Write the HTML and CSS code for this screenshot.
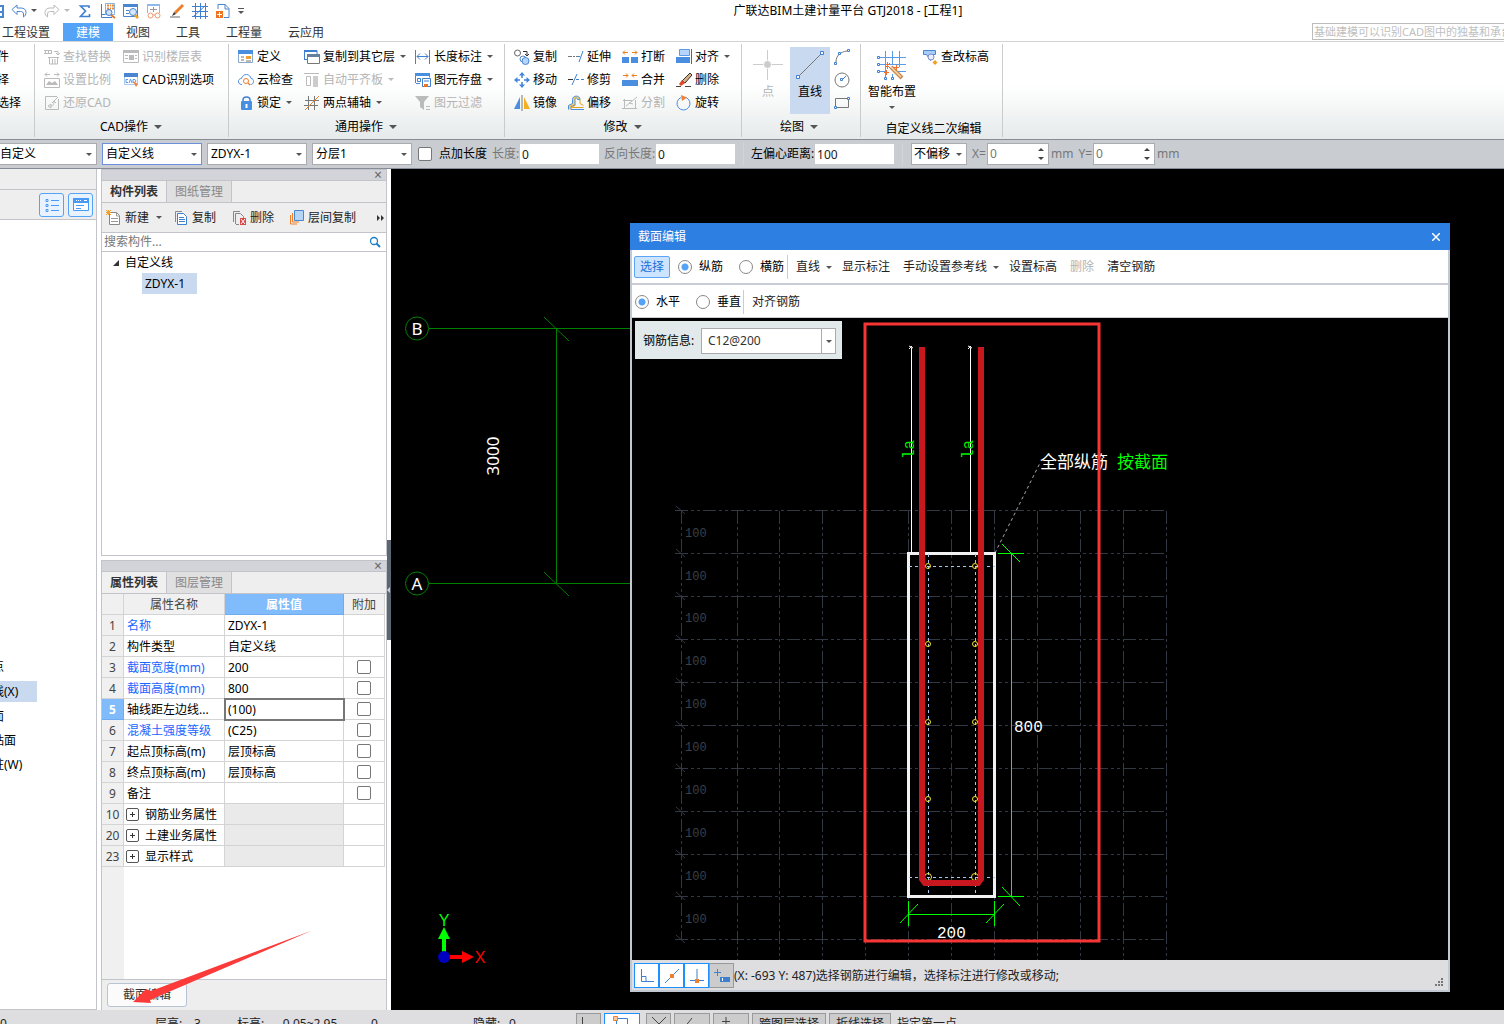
FILE: index.html
```html
<!DOCTYPE html>
<html lang="zh-CN">
<head>
    <meta charset="UTF-8">
    <meta name="viewport" content="width=device-width, initial-scale=1.0">
    <title>广联达BIM土建计量平台 GTJ2018</title>
    <link rel="stylesheet" href="styles.css">
</head>
<body>
<div class="app">

    <header class="titlebar">
        <div class="quick">
            <svg class="quick-save" width="4" height="16" viewBox="0 0 4 16"><path d="M0 3h3v11H0M0 9h3" fill="none" stroke="#4a86d0" stroke-width="2"/></svg>
            <button aria-label="撤销"><svg width="16" height="16" viewBox="0 0 16 16"><path d="M1 6.500l5-4.500v3h4c3 0 5 1.500 5 4.500 0 2-1 3.500-2.500 4.500v-3c0-1.500-1-2.500-3-2.500H6v3z" fill="#fff" stroke="#4a86d0"/></svg></button>
            <i class="caret"></i>
            <button aria-label="重做"><svg width="16" height="16" viewBox="0 0 16 16"><path d="M15 6.500l-5-4.500v3H6c-3 0-5 1.500-5 4.500 0 2 1 3.500 2.500 4.500v-3c0-1.500 1-2.500 3-2.500H10v3z" fill="#fff" stroke="#bbb"/></svg></button>
            <i class="caret dim"></i>
            <button aria-label="汇总计算"><svg width="16" height="16" viewBox="0 0 16 16"><path d="M12 5V3H3.500l5 5-5 5.500H12.500v-2.500" fill="none" stroke="#3f7fcf" stroke-width="1.600"/></svg></button>
            <button aria-label="查看工程量"><svg width="16" height="16" viewBox="0 0 16 16"><path d="M1.500 1v13.500H12M1.500 11.500h4" fill="none" stroke="#3f7fcf"/><path d="M5.500 .5h9v11h-9z" fill="#fff" stroke="#8fb0dc"/><path d="M7 2.500h2M10 2.500h1M12 2.500h2M7 5.500h2M10 5.500h1M12 5.500h2" stroke="#e8853b" stroke-width="2"/><circle cx="9" cy="9.500" r="3" fill="#cfe2f8" stroke="#3f7fcf"/><path d="M11 12l4 3" stroke="#d87830" stroke-width="2"/></svg></button>
            <button aria-label="查看报表"><svg width="16" height="16" viewBox="0 0 16 16"><path d="M.5 1.500h14v12H.5z" fill="#fff" stroke="#4a86d0"/><path d="M0 1h15v3H0z" fill="#4a86d0"/><path d="M3 7.500h3M3 10.500h3" stroke="#4a86d0"/><circle cx="10" cy="9" r="3.500" fill="#d8e8fa" stroke="#4a86d0"/><path d="M12 12l3 3" stroke="#f0a020" stroke-width="2.500"/></svg></button>
            <button aria-label="查看计算式"><svg width="16" height="16" viewBox="0 0 16 16"><path d="M1.500 10V1.500h12V10" fill="#fff" stroke="#8fb8e8"/><path d="M1 1h13v2H1z" fill="#8fb8e8"/><path d="M4 6.500h7M7.500 4v5" stroke="#999"/><circle cx="4.500" cy="12.500" r="2.500" fill="#fff" stroke="#f0986a"/><circle cx="11.500" cy="12.500" r="2.500" fill="#fff" stroke="#f0986a"/><path d="M7 12h2" stroke="#f0986a"/></svg></button>
            <button aria-label="编辑"><svg width="16" height="16" viewBox="0 0 16 16"><path d="M1 14h10" stroke="#666"/><path d="M6 10l8-8" stroke="#ee7f2d" stroke-width="3"/><path d="M3 13l2-4 2 2z" fill="#333"/></svg></button>
            <button aria-label="轴网"><svg width="16" height="16" viewBox="0 0 16 16"><path d="M3.500 0v16M8.500 0v16M13.500 0v16M0 3.500h16M0 8.500h16M0 13.500h16M2 13L14 2" fill="none" stroke="#3f7fcf"/></svg></button>
            <button aria-label="新建构件"><svg width="16" height="16" viewBox="0 0 16 16"><path d="M3 6V1.500h7l4 4v9H9" fill="#fff" stroke="#4a86d0"/><path d="M10 1v5h4" fill="none" stroke="#4a86d0"/><path d="M1 8h7v7H1z" fill="#ee7420"/><path d="M4.500 9v5M2 11.500h5" stroke="#fff"/></svg></button>
            <i class="caret lined"></i>
        </div>
        <h1>广联达BIM土建计量平台 GTJ2018 - [工程1]</h1>
    </header>

    <nav class="tabs">
        <a href="#">工程设置</a>
        <a href="#" class="active">建模</a>
        <a href="#">视图</a>
        <a href="#">工具</a>
        <a href="#">工程量</a>
        <a href="#">云应用</a>
        <input type="text" class="hint" aria-label="搜索" placeholder="基础建模可以识别CAD图中的独基和承台">
    </nav>

    <section class="ribbon">
        <div class="group group-select">
            <div class="cols">
                <div class="col"><button>件</button><button>择</button><button>选择</button></div>
            </div>
        </div>

        <div class="group group-cad">
            <div class="cols">
                <div class="col">
                    <button disabled><svg width="16" height="16" viewBox="0 0 16 16"><path d="M0 1.500h8M0 4.500h8M1.500 1v4M4.500 1v4M7.500 1v4M10 2.500h4v3M12 4l2 2 2-2M4 8.500h11M5.500 8v7h8V8M8.500 10v5M11 10v5" fill="none" stroke="#bbb"/></svg>查找替换</button>
                    <button disabled><svg width="16" height="16" viewBox="0 0 16 16"><path d="M1 2.500h5M10 2.500h5M3 .5l-2 2 2 2M13 .5l2 2-2 2M.5 6.500h15v9H.5z" fill="none" stroke="#bbb"/><path d="M2 13l3-4 3 2 3-2 3 4z" fill="#bbb"/></svg>设置比例</button>
                    <button disabled><svg width="16" height="16" viewBox="0 0 16 16"><path d="M13 1.500H1.500v13h13V4M4 11l3 2v-4zM7 11c3 0 3-3 3-5l4-4M10 6l-2 2M10 6l2 2" fill="none" stroke="#bbb"/></svg>还原CAD</button>
                </div>
                <div class="col">
                    <button disabled><svg width="16" height="16" viewBox="0 0 16 16"><path d="M.5 1.500h15v12H.5z" fill="none" stroke="#bbb"/><path d="M0 1h16v3H0zM6 6h5v5H6z" fill="#bbb"/><path d="M2 6.500h3M2 9.500h3M12 6.500h2M12 9.500h2" stroke="#bbb"/></svg>识别楼层表</button>
                    <button><svg width="16" height="16" viewBox="0 0 16 16"><path d="M1.500 2.500h13v10h-13z" fill="#fff" stroke="#a8c8ee"/><path d="M1 1h14v4H1z" fill="#4a86d0"/><path d="M5 7.500H3v3h2M6 11l1.500-4L9 11M10 7.500h2l1 1.500-1 1.500h-2z" fill="none" stroke="#5b9be5"/><path d="M10 9l5 3-2 3z" fill="#f0803c"/></svg>CAD识别选项</button>
                </div>
            </div>
            <button class="group-label">CAD操作<i class="caret big"></i></button>
        </div>

        <div class="group group-common">
            <div class="cols">
                <div class="col">
                    <button><svg width="16" height="16" viewBox="0 0 16 16"><path d="M.5 2.500h14v11H.5z" fill="#fff" stroke="#8aa8cc"/><path d="M0 1h15v4H0z" fill="#4a8ee0"/><path d="M3 8h3M3 11h3M8 12h5" stroke="#777"/><path d="M8 7h5v3H8z" fill="#f0a030"/></svg>定义</button>
                    <button><svg width="16" height="16" viewBox="0 0 16 16"><path d="M4 12.500C1 12.500 0 10.500 .500 8.500 1 7 2.500 6.500 3.500 6.500 4 4 6 2.500 8.500 2.500S12.500 4.500 13 6.500c2 0 2.500 1.500 2.500 3 0 2-1.500 3-3 3" fill="none" stroke="#4a8ee0"/><circle cx="8" cy="9" r="2.500" fill="#fff" stroke="#f08030"/><path d="M10 11l2 2" stroke="#f08030" stroke-width="1.500"/></svg>云检查</button>
                    <button><svg width="16" height="16" viewBox="0 0 16 16"><path d="M5 8V5c0-4 7-4 7 0v3" fill="none" stroke="#3f7fcf" stroke-width="1.500"/><rect x="3" y="6" width="11" height="9" rx="1" fill="#4a8ee0"/><path d="M8.500 9v4" stroke="#fff" stroke-width="2"/></svg>锁定<i class="caret"></i></button>
                </div>
                <div class="col">
                    <button><svg width="16" height="16" viewBox="0 0 16 16"><path d="M.5 2v8M0 10.500h4M0 1.500h13v4" fill="none" stroke="#3f7fcf"/><path d="M0 1h13v2H0z" fill="#3f7fcf"/><path d="M3.500 5.500h12v9h-12z" fill="#fff" stroke="#777"/><path d="M3 5h13v3H3z" fill="#66809c"/></svg>复制到其它层<i class="caret"></i></button>
                    <button disabled><svg width="16" height="16" viewBox="0 0 16 16"><path d="M0 1.500h15M2.500 4.500h4v9h-4z" fill="none" stroke="#bbb"/><path d="M9 4h5v11H9z" fill="#ccc"/></svg>自动平齐板<i class="caret dim"></i></button>
                    <button><svg width="16" height="16" viewBox="0 0 16 16"><path d="M4.500 1v14M10.500 1v14M1 5.500h14M0 10.500h14" stroke="#777"/><path d="M1 15L15 1" stroke="#ee7f2d"/></svg>两点辅轴<i class="caret"></i></button>
                </div>
                <div class="col">
                    <button><svg width="16" height="16" viewBox="0 0 16 16"><path d="M.5 1v14M14.500 1v14" stroke="#777"/><path d="M2 7.500h11M5 4.500l-3 3 3 3M10 4.500l3 3-3 3" fill="none" stroke="#3f7fcf"/></svg>长度标注<i class="caret"></i></button>
                    <button><svg width="16" height="16" viewBox="0 0 16 16"><path d="M.5 11V1.500h14v4M1 11.500h4" fill="none" stroke="#4a86d0"/><path d="M0 1h15v3H0z" fill="#4a8ee0"/><path d="M2.500 6.500h3v3h-3zM7.500 6.500h8v8h-8z" fill="#fff" stroke="#3f7fcf"/><path d="M9 12h4v3H9z" fill="#ee7420"/><path d="M9 9h5" stroke="#3f7fcf"/></svg>图元存盘<i class="caret"></i></button>
                    <button disabled><svg width="16" height="16" viewBox="0 0 16 16"><path d="M0 1h14L9 7v8l-4-3V7z" fill="#bbb"/><path d="M11 11.500h4M11 14.500h4" stroke="#bbb"/></svg>图元过滤</button>
                </div>
            </div>
            <button class="group-label">通用操作<i class="caret big"></i></button>
        </div>

        <div class="group group-modify">
            <div class="cols">
                <div class="col">
                    <button><svg width="16" height="16" viewBox="0 0 16 16"><circle cx="3.500" cy="4" r="3" fill="#fff" stroke="#666"/><path d="M9 2.500h4v4M11 5l2 2 2-2" fill="none" stroke="#333"/><circle cx="9" cy="10" r="3" fill="#fff" stroke="#4a86d0"/><circle cx="11.500" cy="12" r="3.500" fill="#b5d5f8" stroke="#4a86d0"/></svg>复制</button>
                    <button><svg width="16" height="16" viewBox="0 0 16 16"><path d="M8 0l3 3.500H5zM8 16l3-3.500H5zM0 8l3.500-3v6zM16 8l-3.500-3v6z" fill="#3f85da"/><path d="M8 3v3M8 10v3M3 8h3M10 8h3" stroke="#3f85da" stroke-width="1.500"/></svg>移动</button>
                    <button><svg width="16" height="16" viewBox="0 0 16 16"><path d="M6 2v12H0z" fill="#4a8ee0"/><path d="M10 2v12h6z" fill="#f5b020"/><path d="M8 0v16" stroke="#777"/></svg>镜像</button>
                </div>
                <div class="col">
                    <button><svg width="16" height="16" viewBox="0 0 16 16"><path d="M0 7.500h4M5 7.500h2M8 7.500h2" stroke="#777"/><path d="M10 7.500h2M11 13l4-11" stroke="#3f7fcf"/></svg>延伸</button>
                    <button><svg width="16" height="16" viewBox="0 0 16 16"><path d="M0 7.500h5" stroke="#333"/><path d="M4 13l5-11M8 7.500h3M13 7.500h3" stroke="#3f7fcf"/></svg>修剪</button>
                    <button><svg width="16" height="16" viewBox="0 0 16 16"><path d="M.5 14.500v-4l4-2V4.500C4.500 0 12 0 12 4.500H9.500c0-2-2.500-2-2.500 0V10l-4 1.500V14.500H16" fill="#ffd060" stroke="#4a8ee0"/><path d="M12 4.500v4l3.500 2M7.500 10l-4 2.500h12" fill="none" stroke="#e8a020"/></svg>偏移</button>
                </div>
                <div class="col">
                    <button><svg width="16" height="16" viewBox="0 0 16 16"><path d="M0 8h7v6H0zM9 8h7v6H9z" fill="#4a8ee0"/><path d="M1 3.500h5M3 1.500l-2 2 2 2M10 3.500h5M13 1.500l2 2-2 2" fill="none" stroke="#e87f20"/></svg>打断</button>
                    <button><svg width="16" height="16" viewBox="0 0 16 16"><path d="M0 8h16v6H0z" fill="#4a8ee0"/><path d="M1 3.500h5M4 1.500l2 2-2 2M10 3.500h5M12 1.500l-2 2 2 2" fill="none" stroke="#e87f20"/></svg>合并</button>
                    <button disabled><svg width="16" height="16" viewBox="0 0 16 16"><path d="M10 5.500H1M2.500 4v10M0 13.500h15M13.500 5v9M4 11L15 2M7 8l4 1" fill="none" stroke="#bbb"/></svg>分割</button>
                </div>
                <div class="col">
                    <button><svg width="16" height="16" viewBox="0 0 16 16"><path d="M3.500 .5h10v6h-10z" fill="#b5d5fb" stroke="#5b9be5"/><path d="M0 8h14v6H0z" fill="#4a8ee0"/><path d="M15.500 0v15" stroke="#666"/></svg>对齐<i class="caret"></i></button>
                    <button><svg width="16" height="16" viewBox="0 0 16 16"><path d="M0 14.500h5M9 14.500h6" stroke="#444"/><path d="M6 9l8-8 2 2-7 8z" fill="#d8b088" stroke="#333"/><path d="M3 12l3-4 3 3-4 3z" fill="#e04828"/></svg>删除</button>
                    <button><svg width="16" height="16" viewBox="0 0 16 16"><path d="M10 2.500A6.500 6.500 0 1 1 5 2.500" fill="none" stroke="#4a8ee0"/><path d="M5 0l6 2.500L6 6z" fill="#f08030"/></svg>旋转</button>
                </div>
            </div>
            <button class="group-label">修改<i class="caret big"></i></button>
        </div>

        <div class="group group-draw">
            <div class="cols">
                <button class="large" disabled><svg width="30" height="30" viewBox="0 0 30 30"><path d="M14.500 0v30M0 14.500h30" stroke="#ccc"/><circle cx="14.500" cy="14.500" r="4" fill="#ccc" stroke="#fff"/></svg>点</button>
                <button class="large on"><svg width="30" height="30" viewBox="0 0 30 30"><path d="M4 26L26 4" stroke="#777"/><path d="M1.500 25.500h3v3h-3zM25.500 1.500h3v3h-3z" fill="#fff" stroke="#3f7fcf"/></svg>直线</button>
                <div class="col">
                    <button aria-label="弧线"><svg width="16" height="16" viewBox="0 0 16 16"><path d="M2 13C2 7 6 3 13 2" fill="none" stroke="#777"/><path d="M.5 13.500h2v2h-2zM4.500 3.500h2v2h-2zM13.500 .5h2v2h-2z" fill="#fff" stroke="#3f7fcf"/></svg></button>
                    <button aria-label="圆"><svg width="16" height="16" viewBox="0 0 16 16"><circle cx="8" cy="8" r="7" fill="none" stroke="#777"/><path d="M8 8l4-4" stroke="#3f7fcf"/><path d="M6.500 6.500h2v2h-2z" fill="#fff" stroke="#3f7fcf"/></svg></button>
                    <button aria-label="矩形"><svg width="16" height="16" viewBox="0 0 16 16"><path d="M1.500 3.500h13v9h-13z" fill="none" stroke="#777"/><path d="M.5 11.500h2v2h-2zM13.500 2.500h2v2h-2z" fill="#fff" stroke="#3f7fcf"/></svg></button>
                </div>
            </div>
            <button class="group-label">绘图<i class="caret big"></i></button>
        </div>

        <div class="group group-second">
            <div class="cols">
                <button class="large"><svg width="30" height="30" viewBox="0 0 30 30"><path d="M8.500 1v27M15.500 1v14M22.500 1v16M15.500 24v4M1 7.500h28M1 14.500h28M1 21.500h8M20 21.500h9" stroke="#5b9be5"/><path d="M.5 6.500h2v2h-2zM.5 13.500h2v2h-2zM.5 20.500h2v2h-2zM7.500 27.500h2v2h-2zM14.500 27.500h2v2h-2z" fill="#fff" stroke="#3f7fcf"/><path d="M14 17l11 11" stroke="#c88850" stroke-width="4"/><path d="M14 17l10 10" stroke="#f8d8a8" stroke-width="1.500"/><path d="M8 13l5 5M13 13l-5 5M10.500 12v7M7 22.500h5M9.500 20v5M19.500 15v5M17 17.500h5" stroke="#f07030"/></svg>智能布置<i class="caret"></i></button>
                <div class="col">
                    <button><svg width="16" height="16" viewBox="0 0 16 16"><path d="M1.500 1.500h12v4h-3l-2 6-4-6h-3z" fill="#a8cdf8" stroke="#4a86d0"/><circle cx="9" cy="8" r="3" fill="#e8f0fa" stroke="#8088d0"/><path d="M13 11l2.500 2.500L13 16l-2.500-2.500z" fill="#f0a020"/></svg>查改标高</button>
                </div>
            </div>
            <button class="group-label">自定义线二次编辑</button>
        </div>
    </section>

    <section class="options">
        <span class="drop"><select aria-label="类别"><option>自定义</option></select></span>
        <span class="drop focus"><select aria-label="构件类型"><option>自定义线</option></select></span>
        <span class="drop"><select aria-label="构件"><option>ZDYX-1</option></select></span>
        <span class="drop"><select aria-label="分层"><option>分层1</option></select></span>
        <label class="check"><input type="checkbox">点加长度</label>
        <label class="field off">长度:<input type="text" value="0"></label>
        <label class="field off">反向长度:<input type="text" value="0"></label>
        <label class="field ruled">左偏心距离:<input type="text" value="100"></label>
        <span class="drop small"><select aria-label="偏移方式"><option>不偏移</option></select></span>
        <label class="spin">X=<span><input type="text" value="0"><i></i></span>mm</label>
        <label class="spin">Y=<span><input type="text" value="0"><i></i></span>mm</label>
    </section>

    <main class="main">
        <aside class="nav">
            <div class="nav-head"></div>
            <div class="nav-tools">
                <button aria-label="列表"><svg width="16" height="16" viewBox="0 0 16 16"><path d="M2 2.500h2v2H2zM2 7.500h2v2H2zM2 12.500h2v2H2z" fill="none" stroke="#4a9af5"/><path d="M7 3.500h8M7 8.500h8M7 13.500h8" stroke="#4a9af5"/></svg></button>
                <button aria-label="窗口"><svg width="16" height="16" viewBox="0 0 16 16"><path d="M.5 1.500h15v12H.5z" fill="#fff" stroke="#4a9af5"/><path d="M0 1h16v5H0z" fill="#4a9af5"/><path d="M3 3.500h1M5 3.500h1M7 3.500h1M11 3.500h3" stroke="#fff"/><path d="M3 8.500h8M3 11.500h5" stroke="#4a9af5"/></svg></button>
            </div>
            <ul class="nav-list">
                <li>点</li>
                <li><span class="selected">线(X)</span></li>
                <li>面</li>
                <li>贴面</li>
                <li>柱(W)</li>
            </ul>
        </aside>

        <div class="panels">
            <section class="panel">
                <div class="panel-bar"><button aria-label="关闭">×</button></div>
                <div class="panel-tabs"><button class="active">构件列表</button><button>图纸管理</button></div>
                <div class="panel-tools">
                    <button><svg width="16" height="16" viewBox="0 0 16 16"><path d="M3.500 2.500h7l3 3v9h-10z" fill="#fff" stroke="#888"/><path d="M10.500 2v4h3M5 8.500h7M5 11.500h7" fill="none" stroke="#999"/><path d="M0 0l5 5M5 0L0 5M2.500 0v5M0 2.500h5" stroke="#f0a030"/></svg>新建<i class="caret"></i></button>
                    <button><svg width="16" height="16" viewBox="0 0 16 16"><path d="M2.500 12V1.500H9" fill="none" stroke="#888"/><path d="M4.500 3.500h6l3 3v8h-9z" fill="#fff" stroke="#3f7fcf"/><path d="M6 7.500h5M6 9.500h6M6 11.500h6" stroke="#3f7fcf"/></svg>复制</button>
                    <button><svg width="16" height="16" viewBox="0 0 16 16"><path d="M2.500 12V1.500H9M4.500 14V3.500h5l3 3V8M5 14.500h3" fill="none" stroke="#888"/><path d="M9 8h6v7H9z" fill="#d84848"/><path d="M10 9l4 5M14 9l-4 5" stroke="#fff"/></svg>删除</button>
                    <button><svg width="16" height="16" viewBox="0 0 16 16"><path d="M1.500 5v9H8M3.500 3v9H10" fill="none" stroke="#ee7f2d"/><path d="M5.500 .5h9v10h-9z" fill="#b5d5f8" stroke="#4a86d0"/></svg>层间复制</button>
                    <button class="more" aria-label="更多"><svg width="8" height="8" viewBox="0 0 8 8"><path d="M0 1l3 3-3 3zM4 1l3 3-3 3z" fill="#333"/></svg></button>
                </div>
                <div class="search">
                    <input type="text" aria-label="搜索构件" placeholder="搜索构件...">
                    <svg width="12" height="12" viewBox="0 0 12 12"><circle cx="5" cy="5" r="3.500" fill="none" stroke="#1a7fc8" stroke-width="1.300"/><path d="M7.500 7.500l3.500 3.500" stroke="#1a7fc8" stroke-width="2"/></svg>
                </div>
                <ul class="tree">
                    <li><svg width="8" height="8" viewBox="0 0 8 8"><path d="M7 1v6H1z" fill="#333"/></svg>自定义线
                        <ul><li><span class="selected">ZDYX-1</span></li></ul>
                    </li>
                </ul>
            </section>

            <section class="panel props">
                <div class="panel-bar"><button aria-label="关闭">×</button></div>
                <div class="panel-tabs"><button class="active">属性列表</button><button>图层管理</button></div>
                <div class="props-body">
                    <table>
                        <colgroup><col class="c-no"><col class="c-name"><col class="c-value"><col class="c-extra"></colgroup>
                        <thead>
                            <tr><th></th><th>属性名称</th><th class="on">属性值</th><th>附加</th></tr>
                        </thead>
                        <tbody>
                            <tr><th>1</th><td class="link">名称</td><td>ZDYX-1</td><td></td></tr>
                            <tr><th>2</th><td>构件类型</td><td>自定义线</td><td></td></tr>
                            <tr><th>3</th><td class="link">截面宽度(mm)</td><td>200</td><td><input type="checkbox" aria-label="附加截面宽度"></td></tr>
                            <tr><th>4</th><td class="link">截面高度(mm)</td><td>800</td><td><input type="checkbox" aria-label="附加截面高度"></td></tr>
                            <tr><th class="on">5</th><td>轴线距左边线...</td><td class="editing">(100)</td><td><input type="checkbox" aria-label="附加轴线距左边线"></td></tr>
                            <tr><th>6</th><td class="link">混凝土强度等级</td><td>(C25)</td><td><input type="checkbox" aria-label="附加混凝土强度等级"></td></tr>
                            <tr><th>7</th><td>起点顶标高(m)</td><td>层顶标高</td><td><input type="checkbox" aria-label="附加起点顶标高"></td></tr>
                            <tr><th>8</th><td>终点顶标高(m)</td><td>层顶标高</td><td><input type="checkbox" aria-label="附加终点顶标高"></td></tr>
                            <tr><th>9</th><td>备注</td><td></td><td><input type="checkbox" aria-label="附加备注"></td></tr>
                            <tr><th>10</th><td><button class="plus" aria-label="展开"></button>钢筋业务属性</td><td class="blank"></td><td></td></tr>
                            <tr><th>20</th><td><button class="plus" aria-label="展开"></button>土建业务属性</td><td class="blank"></td><td></td></tr>
                            <tr><th>23</th><td><button class="plus" aria-label="展开"></button>显示样式</td><td class="blank"></td><td></td></tr>
                        </tbody>
                    </table>
                </div>
                <div class="props-foot">
                    <button>截面编辑</button>
                    <svg class="pointer" width="184" height="76" viewBox="130 929 184 76"><path d="M312 930.500L151 991l-5-2-13 13 18 1-1-3z" fill="#fc3a3a"/></svg>
                </div>
            </section>
        </div>

        <div class="splitter"><i></i></div>

        <div class="canvas">
            <svg class="plan" width="1113" height="841" viewBox="391 169 1113 841">
                <g fill="none" stroke="#008000">
                    <path d="M429 328.500H640M429 583.500H640M556.500 328V584M544 317l25 24M544 572l25 24"/>
                    <circle cx="417" cy="328.500" r="11.500"/>
                    <circle cx="417" cy="583.500" r="11.500"/>
                </g>
                <g class="plan-text" fill="#fff" text-anchor="middle">
                    <text x="417" y="335">B</text>
                    <text x="417" y="590">A</text>
                    <text transform="translate(499 456) rotate(-90)">3000</text>
                </g>
                <path d="M444 957V936" stroke="#0f0" stroke-width="4"/>
                <path d="M444 927l6 12h-12z" fill="#0f0"/>
                <path d="M444 957h19" stroke="#f00" stroke-width="4"/>
                <path d="M474 957l-12 6v-12z" fill="#f00"/>
                <circle cx="444" cy="957" r="6" fill="#0000c0"/>
                <g class="axis-text" text-anchor="middle">
                    <text x="444" y="926" fill="#0f0">Y</text>
                    <text x="480" y="963" fill="#f00">X</text>
                </g>
            </svg>

            <div class="dialog" role="dialog" aria-label="截面编辑">
                <div class="dialog-title"><h2>截面编辑</h2><button aria-label="关闭"><svg width="8" height="8" viewBox="0 0 8 8"><path d="M0 0l8 8M8 0L0 8" stroke="#fff" stroke-width="1.500"/></svg></button></div>
                <div class="dialog-tools">
                    <button class="on">选择</button>
                    <div class="radios"><label><input type="radio" name="bar" checked>纵筋</label><label><input type="radio" name="bar">横筋</label></div>
                    <button>直线<i class="caret"></i></button>
                    <button>显示标注</button>
                    <button>手动设置参考线<i class="caret"></i></button>
                    <button>设置标高</button>
                    <button disabled>删除</button>
                    <button>清空钢筋</button>
                </div>
                <div class="dialog-tools">
                    <div class="radios first"><label><input type="radio" name="dir" checked>水平</label><label><input type="radio" name="dir">垂直</label></div>
                    <button>对齐钢筋</button>
                </div>
                <div class="section">
                    <svg width="816" height="642" viewBox="632 318 816 642">
                        <g fill="none" stroke="#323944" stroke-dasharray="13 3 3 3 3 3">
                            <path d="M675 510.500h492M675 553.500h492M675 596.500h492M675 639.500h492M675 682.500h492M675 725.500h492M675 768.500h492M675 811.500h492M675 854.500h492M675 896.500h492M675 939.500h492"/>
                            <path d="M681.500 511v429M737.500 511v449M779.500 511v449M822.500 511v449M865.500 511v449M908.500 511v449M951.500 511v449M994.500 511v449M1037.500 511v449M1080.500 511v449M1123.500 511v449M1166.500 511v449"/>
                        </g>
                        <path d="M676 506l9 8M676 549l9 8M676 592l9 8M676 635l9 8M676 678l9 8M676 721l9 8M676 764l9 8M676 807l9 8M676 850l9 8M676 892l9 8M676 935l9 8" stroke="#323944"/>
                        <g class="grid-text" fill="#39414d">
                            <text x="685" y="537">100</text>
                            <text x="685" y="580">100</text>
                            <text x="685" y="622">100</text>
                            <text x="685" y="665">100</text>
                            <text x="685" y="708">100</text>
                            <text x="685" y="751">100</text>
                            <text x="685" y="794">100</text>
                            <text x="685" y="837">100</text>
                            <text x="685" y="880">100</text>
                            <text x="685" y="923">100</text>
                        </g>
                        <path d="M995 553l45-90" stroke="#aaa" stroke-dasharray="3 3"/>
                        <!-- concrete outline -->
                        <rect x="908.500" y="553.500" width="86" height="343" fill="none" stroke="#f2f2f2" stroke-width="3"/>
                        <path d="M911.500 348v205M970.500 348v205M909 346l4 2M968 346l4 2M909 349l3-3M968 349l3-3" stroke="#fff"/>
                        <path d="M928.500 554v342M975.500 554v342M909 566.500h86M909 877.500h86" stroke="#a8c8f0" stroke-dasharray="3 3"/>
                        <g fill="none" stroke="#f8e030">
                            <circle cx="928" cy="566" r="2.500"/><circle cx="975" cy="566" r="2.500"/>
                            <circle cx="928" cy="644" r="2.500"/><circle cx="975" cy="644" r="2.500"/>
                            <circle cx="928" cy="722" r="2.500"/><circle cx="975" cy="722" r="2.500"/>
                            <circle cx="928" cy="799" r="2.500"/><circle cx="975" cy="799" r="2.500"/>
                            <circle cx="928" cy="877" r="3.500"/><circle cx="975" cy="877" r="3.500"/>
                        </g>
                        <path d="M922 347v532l3 4h53l3-4V347" fill="none" stroke="#c8171e" stroke-width="6"/>
                        <path d="M1011.500 553v344M998 553.500h26M998 896.500h26M1002 544l18 18M1002 887l18 19M908 914.500h86M908.500 901v25M994.500 901v25M900 923l18-19M986 923l18-19" fill="none" stroke="#0f0"/>
                        <g class="dim-text">
                            <text x="1014" y="732" fill="#fff">800</text>
                            <text x="937" y="938" fill="#fff">200</text>
                            <text transform="translate(914 459) rotate(-90)" fill="#0e0">la</text>
                            <text transform="translate(973 459) rotate(-90)" fill="#0e0">la</text>
                        </g>
                        <g class="note-text">
                            <text x="1040" y="468" fill="#fff">全部纵筋</text>
                            <text x="1117" y="468" fill="#0f0">按截面</text>
                        </g>
                        <rect x="865" y="324" width="234" height="617" fill="none" stroke="#f83535" stroke-width="3"/>
                    </svg>
                    <div class="rebar">
                        <label for="rebar">钢筋信息:</label>
                        <span class="drop boxed"><select id="rebar"><option>C12@200</option></select></span>
                    </div>
                </div>
                <div class="dialog-status">
                    <button aria-label="正交"><svg width="16" height="16" viewBox="0 0 16 16"><path d="M2.500 1v12.500H15M3 8.500h4v5" fill="none" stroke="#3f7fcf"/></svg></button>
                    <button aria-label="中点"><svg width="16" height="16" viewBox="0 0 16 16"><path d="M1 15L15 1" stroke="#3f7fcf"/><path d="M6 6h4v4H6z" fill="#ee7f2d"/></svg></button>
                    <button aria-label="垂足"><svg width="16" height="16" viewBox="0 0 16 16"><path d="M8 1v11M1 12.500h14" stroke="#3f7fcf"/><path d="M6 11h4v4H6z" fill="#ee7f2d"/></svg></button>
                    <button class="off" aria-label="动态输入"><svg width="16" height="16" viewBox="0 0 16 16"><path d="M0 4.500h7M3.500 1v7" stroke="#3f7fcf"/><path d="M6 9h10v5H6z" fill="#3f7fcf"/><path d="M8.500 10v3" stroke="#fff"/></svg></button>
                    <span>(X: -693 Y: 487)选择钢筋进行编辑，选择标注进行修改或移动;</span>
                    <svg class="grip" width="9" height="9" viewBox="0 0 9 9"><path d="M6 0h2v2H6zM3 3h2v2H3zM6 3h2v2H6zM0 6h2v2H0zM3 6h2v2H3zM6 6h2v2H6z" fill="#777"/></svg>
                </div>
            </div>
        </div>
    </main>

    <footer class="status">
        <div class="status-text">
            <span>0</span><span>层高:</span><span>3</span><span>标高:</span><span>-0.05~2.95</span><span>0</span><span>隐藏:</span><span>0</span>
        </div>
        <div class="status-tools">
            <button class="narrow" aria-label="正交"><svg width="16" height="16" viewBox="0 0 16 16"><path d="M1.500 1v14H16" fill="none" stroke="#444"/></svg></button>
            <button class="on" aria-label="捕捉"><svg width="20" height="16" viewBox="0 0 20 16"><path d="M4.500 2.500h11v11h-11z" fill="none" stroke="#3f7fcf"/><path d="M1.500 .5h4v4h-4z" fill="#ffc9a0" stroke="#ee7f2d"/></svg></button>
            <button class="narrow" aria-label="交点"><svg width="16" height="16" viewBox="0 0 16 16"><path d="M1 1l14 14M15 1L1 15" stroke="#444"/></svg></button>
            <button aria-label="垂点"><svg width="20" height="16" viewBox="0 0 20 16"><path d="M10 2L2 12l4 2" fill="none" stroke="#444"/></svg></button>
            <button aria-label="坐标"><svg width="20" height="16" viewBox="0 0 20 16"><path d="M5 1v9M1 5.500h8M8 12h10" stroke="#444"/></svg></button>
            <button>跨图层选择</button>
            <button>折线选择</button>
            <span>指定第一点</span>
        </div>
    </footer>
</div>
</body>
</html>
```

FILE: styles.css
```css
* {
    box-sizing: border-box;
}
body {
    margin: 0;
    height: 100vh;
    overflow: hidden;
    font: 12px/16px "Noto Sans", "Noto Sans CJK SC", sans-serif;
    color: #000;
    background: #fff;
}
button, input, select {
    font: inherit;
    color: inherit;
    margin: 0;
    padding: 0;
    border: 0;
    border-radius: 0;
    background: none;
}
button {
    display: flex;
    align-items: center;
    white-space: nowrap;
    cursor: pointer;
}
button:disabled {
    color: #b4b4b4;
}
svg {
    display: block;
    flex: none;
}
h1, h2, ul {
    margin: 0;
    padding: 0;
    font-size: 12px;
    font-weight: normal;
    list-style: none;
}
/* the status bar runs below the window edge */
.app {
    display: flex;
    flex-direction: column;
    height: calc(100vh + 12px);
}
.caret {
    flex: none;
    border: 3px solid transparent;
    border-top-color: #555;
    border-bottom: 0;
}
.caret.big {
    border-width: 4px 4px 0;
}
.caret.dim {
    border-top-color: #bbb;
}
.caret.lined {
    position: relative;
}
.caret.lined::before {
    content: "";
    position: absolute;
    left: -3px;
    top: -6px;
    width: 6px;
    height: 1px;
    background: #555;
}

/* title bar */
.titlebar {
    display: flex;
    align-items: center;
    height: 21px;
}
.quick {
    display: flex;
    align-items: center;
    gap: 7px;
}
.quick .caret {
    margin: 0 0 0 -3px;
}
.quick .caret.lined {
    margin: 4px 0 0;
}
.titlebar h1 {
    flex: 1;
    padding-right: 52px;
    text-align: center;
}

/* tabs */
.tabs {
    display: flex;
    height: 21px;
    padding-top: 2px;
    margin-left: -11px;
    border-bottom: 1px solid #d4d4d4;
}
.tabs a {
    padding: 0 13px;
    line-height: 19px;
    color: #333;
    text-decoration: none;
}
.tabs a.active {
    color: #fff;
    background: #54a3f7;
}
.hint {
    width: 200px;
    height: 17px;
    margin: 0 -8px 0 auto;
    padding-left: 1px;
    font-size: 11px;
    border: 1px solid #bcbcbc;
}
.hint::placeholder {
    color: #c0c0c0;
}

/* ribbon */
.ribbon {
    display: flex;
    height: 98px;
    background: linear-gradient(#fff 45%, #e6eaea);
    border-bottom: 1px solid #868c92;
}
.group {
    display: flex;
    flex-direction: column;
    padding-top: 3px;
    border-right: 1px solid transparent;
    border-image: linear-gradient(transparent 3px, #c8cccd 3px, #c8cccd 94px, transparent 94px) 1;
}
.group-select {
    width: 35px;
}
.group-select .col {
    margin-left: -3px;
}
.group-cad {
    width: 194px;
    padding-left: 9px;
}
.group-common {
    width: 276px;
    padding-left: 9px;
}
.group-modify {
    width: 237px;
    padding-left: 9px;
}
.group-draw {
    width: 119px;
    padding-left: 6px;
}
.group-second {
    width: 142px;
    padding-left: 4px;
}
.cols {
    display: flex;
    flex: 1;
}
.col button {
    height: 23px;
    gap: 3px;
}
.col .caret {
    margin-left: 2px;
}
.group-cad .col {
    width: 79px;
}
.group-common .col {
    width: 66px;
}
.group-common .col:nth-child(2) {
    width: 111px;
}
.group-modify .col {
    width: 54px;
}
.group-label {
    height: 24px;
    justify-content: center;
    gap: 6px;
    margin-left: -10px;
}
.group-second .group-label {
    height: 21px;
    margin-left: 0;
}
.large {
    flex-direction: column;
    width: 40px;
    height: 67px;
    margin: 2px 2px 0 0;
    padding-top: 3px;
    gap: 4px;
}
.large.on {
    background: #c9d9ef;
}
.large:disabled + .large {
    margin-right: 4px;
}
.group-second .large {
    width: 48px;
    margin: 2px 6px 0 3px;
}
.large .caret {
    margin-top: 2px;
}

/* option bar */
.options {
    display: flex;
    align-items: center;
    height: 29px;
    background: #c9cdd2;
    border-bottom: 1px solid #868c98;
}
.drop {
    position: relative;
    display: flex;
    width: 100px;
    height: 22px;
    margin-right: 5px;
}
.drop:first-child {
    width: 97px;
    margin-left: 0;
}
.drop::after {
    content: "";
    position: absolute;
    right: 5px;
    top: 10px;
    border: 3px solid transparent;
    border-top-color: #555;
    border-bottom: 0;
    pointer-events: none;
}
.drop select {
    appearance: none;
    width: 100%;
    padding: 0 3px;
    background: #fff;
    border: 1px solid #a9abae;
}
.drop:first-child select {
    padding-left: 0;
    border-left: 0;
}
.drop.focus select {
    border-color: #6c90dc;
}
.drop.small {
    width: 56px;
}
.drop.small select {
    padding-left: 2px;
}
input[type="checkbox"] {
    appearance: none;
    width: 14px;
    height: 14px;
    background: #fff;
    border: 1px solid #777;
    border-radius: 2px;
}
.check {
    display: flex;
    align-items: center;
    gap: 7px;
    margin: 0 5px 0 1px;
}
.field {
    display: flex;
    align-items: center;
    width: 107px;
    height: 22px;
    margin-right: 5px;
    white-space: nowrap;
}
.field.off {
    color: #777;
}
.field input {
    width: 79px;
    height: 20px;
    margin-left: auto;
    padding-left: 2px;
    color: #222;
    background: #fff;
}
.field.off + .field.off {
    width: 131px;
}
.field.ruled {
    width: 160px;
    margin: 0 8px 0 3px;
    padding: 0 8px 0 7px;
    border: 1px solid #d2d5d9;
    border-width: 0 1px;
}
.spin {
    display: flex;
    align-items: center;
    gap: 1px;
    margin-right: 5px;
    color: #777;
}
.spin span {
    display: flex;
    align-items: center;
    width: 62px;
    height: 22px;
    margin-right: 1px;
    background: #fff;
    border: 1px solid #a9abae;
}
.spin input {
    width: 50px;
    padding-left: 2px;
}
.spin i {
    display: grid;
    gap: 6px;
}
.spin i::before, .spin i::after {
    content: "";
    border: 3px solid transparent;
    border-top: 0;
    border-bottom-color: #444;
}
.spin i::after {
    border-top: 3px solid #444;
    border-bottom: 0;
}

/* main area */
.main {
    display: flex;
    flex: 1;
    min-height: 0;
}
.nav {
    width: 97px;
    margin-right: 4px;
    border: 1px solid #c2c4c9;
    border-width: 0 1px 1px 0;
}
.nav-head {
    height: 21px;
    background: #eee;
    border-bottom: 1px solid #c2c4c9;
}
.nav-tools {
    display: flex;
    justify-content: flex-end;
    align-items: center;
    gap: 4px;
    height: 30px;
    padding-right: 3px;
    background: #eee;
    border-bottom: 1px solid #c2c4c9;
}
.nav-tools button {
    width: 25px;
    height: 24px;
    justify-content: center;
    background: #e8f3ff;
    border: 1px solid #54a3f7;
    border-radius: 3px;
}
.nav-list {
    margin: 435px 0 0 -8px;
}
.nav-list li {
    height: 24px;
    line-height: 24px;
}
.nav-list .selected {
    display: block;
    width: 45px;
    line-height: 21px;
    margin-top: 2px;
}
.selected {
    background: #c9d9ef;
}
.panels {
    display: grid;
    grid-template-rows: 387fr 450fr;
    gap: 4px;
    flex: none;
    width: 286px;
}
.panel {
    display: flex;
    flex-direction: column;
    min-height: 0;
    border: 1px solid #c2c4c9;
}
.panel-bar {
    display: flex;
    justify-content: flex-end;
    height: 10px;
    background: #d3d4d9;
}
.panel-bar button {
    padding-right: 4px;
    font-size: 14px;
    line-height: 10px;
    color: #666;
}
.panel-tabs {
    display: flex;
    height: 23px;
    background: #eee;
    border: 1px solid #c2c4c9;
    border-width: 1px 0;
}
.panel-tabs button {
    width: 65px;
    justify-content: center;
    color: #888;
    background: #e0e0e0;
    border-right: 1px solid #c2c4c9;
}
.panel-tabs .active {
    font-weight: bold;
    color: #333;
    background: #f0f0f0;
}
.panel-tools {
    display: flex;
    align-items: center;
    gap: 15px;
    height: 30px;
    padding: 0 1px 0 4px;
    background: #eee;
    border-bottom: 1px solid #c2c4c9;
}
.panel-tools button {
    gap: 3px;
    color: #222;
}
.panel-tools .caret {
    margin-left: 4px;
}
.panel-tools button:first-child {
    margin-right: -4px;
}
.panel-tools .more {
    margin-left: auto;
}
.search {
    display: flex;
    align-items: center;
    height: 19px;
    padding: 0 5px 0 2px;
    border-bottom: 1px solid #c2c4c9;
}
.search input {
    flex: 1;
}
.search input::placeholder {
    color: #777;
}
.tree > li {
    padding: 0 10px;
    line-height: 21px;
}
.tree svg {
    display: inline-block;
    margin-right: 5px;
}
.tree ul {
    padding-left: 30px;
}
.tree .selected {
    display: inline-block;
    padding: 0 12px 0 3px;
}

/* property table */
.props {
    border-bottom: 0;
}
.props-body {
    flex: 1;
    background: linear-gradient(to right, #f0f0f0 22px, #fff 22px);
    border-bottom: 1px solid #c2c4c9;
}
table {
    width: 283px;
    table-layout: fixed;
    border-collapse: separate;
    border-spacing: 0;
    background: #fff;
}
.c-no {
    width: 22px;
}
.c-name {
    width: 101px;
}
.c-value {
    width: 119px;
}
.c-extra {
    width: 41px;
}
th, td {
    height: 21px;
    padding: 2px 3px 0;
    line-height: 18px;
    text-align: left;
    white-space: nowrap;
    border: 1px solid #d4d4d4;
    border-width: 0 1px 1px 0;
}
th {
    padding: 2px 0 0;
    font-weight: normal;
    text-align: center;
    color: #444;
    background: #f0f0f0;
}
th.on {
    color: #fff;
    font-weight: bold;
    background: #80bbfb;
    border-color: #6fabef;
}
td:last-child {
    padding: 0 0 1px;
    text-align: center;
}
td input {
    display: block;
    margin: 0 auto;
}
td.link {
    color: #1a66ff;
}
td.blank {
    background: #eaeaea;
}
td.editing {
    outline: 2px solid #777;
    outline-offset: -1px;
}
.plus {
    position: relative;
    display: inline-block;
    width: 13px;
    height: 13px;
    margin: -2px 6px 0 -1px;
    vertical-align: middle;
    border: 1px solid #555;
    border-radius: 2px;
}
.plus::before, .plus::after {
    content: "";
    position: absolute;
    left: 3px;
    top: 5px;
    width: 5px;
    height: 1px;
    background: #333;
}
.plus::after {
    left: 5px;
    top: 3px;
    width: 1px;
    height: 5px;
}
.props-foot {
    position: relative;
    height: 30px;
    padding: 3px 5px;
    background: #eee;
}
.props-foot button {
    width: 80px;
    height: 24px;
    justify-content: center;
    color: #333;
    background: #fbfbfb;
    border: 1px solid #b8c4d4;
    border-radius: 3px;
}
.pointer {
    position: absolute;
    left: 28px;
    bottom: 5px;
}
.splitter {
    display: flex;
    align-items: center;
    width: 4px;
}
.splitter i {
    display: flex;
    align-items: center;
    width: 4px;
    height: 100px;
    background: #5c6673;
}
.splitter i::before {
    content: "";
    border: 3px solid transparent;
    border-right-color: #d0d4da;
    border-left: 0;
}

/* drawing area */
.canvas {
    position: relative;
    flex: 1;
    overflow: hidden;
    background: #000;
}
.plan-text {
    font-size: 17px;
}
.axis-text {
    font: 16px "Liberation Sans", sans-serif;
}
.dialog {
    position: absolute;
    left: 239px;
    top: 54px;
    width: 820px;
    border: 2px solid #c2c8d2;
    border-top: 0;
    background: #fff;
}
.dialog-title {
    display: flex;
    justify-content: space-between;
    align-items: center;
    height: 27px;
    margin: 0 -2px;
    padding: 0 10px 0 8px;
    color: #fff;
    background: #2d80e2;
}
.dialog-tools {
    display: flex;
    align-items: center;
    gap: 1px;
    height: 35px;
    padding: 1px 0 0 2px;
    border-bottom: 2px solid #c9ccd2;
}
.dialog-tools + .dialog-tools {
    height: 33px;
    border-bottom-width: 1px;
}
.dialog-tools button {
    height: 22px;
    padding: 0 5px;
    gap: 6px;
    color: #222;
    border: 1px solid transparent;
}
.dialog-tools button.on {
    color: #1a6fd8;
    background: #cce4ff;
    border-color: #5aa5f5;
    border-radius: 2px;
}
.dialog-tools button:disabled {
    color: #b4b4b4;
}
.dialog-tools .caret {
    margin-right: -3px;
}
.radios {
    display: flex;
    gap: 16px;
    margin-right: 1px;
    padding: 4px 3px 4px 7px;
    border-right: 1px solid #ccc;
}
.radios.first {
    padding: 4px 2px 4px 1px;
}
.radios label {
    display: flex;
    align-items: center;
    gap: 7px;
}
input[type="radio"] {
    appearance: none;
    width: 14px;
    height: 14px;
    border: 1px solid #888;
    border-radius: 50%;
}
input[type="radio"]:checked {
    background: radial-gradient(#54a3f7 3px, #fff 4px);
}
.section {
    position: relative;
    overflow: hidden;
    background: #000;
}
.grid-text {
    font: 12px "Liberation Mono", monospace;
}
.dim-text {
    font: 16px "Liberation Mono", monospace;
}
.note-text {
    font: 17px "Noto Sans CJK SC", sans-serif;
}
.rebar {
    position: absolute;
    left: 3px;
    top: 3px;
    display: flex;
    align-items: center;
    justify-content: space-between;
    width: 207px;
    height: 38px;
    padding: 2px 6px 0 8px;
    background: #e1e9ea;
}
.drop.boxed {
    width: 135px;
    height: 26px;
    margin: 0;
}
.drop.boxed::after {
    right: 4px;
    top: 12px;
}
.drop.boxed::before {
    content: "";
    position: absolute;
    right: 14px;
    top: 0;
    width: 1px;
    height: 26px;
    background: #a9abae;
}
.drop.boxed select {
    padding-left: 6px;
    color: #333;
}
.dialog-status {
    display: flex;
    align-items: center;
    height: 30px;
    padding: 1px 4px 0 2px;
    color: #222;
    background: #dedee0;
}
.dialog-status button {
    width: 25px;
    height: 25px;
    justify-content: center;
    background: #fff;
    border: 1px solid #1e90ff;
}
.dialog-status button.off {
    background: #ccc;
    border-color: #999;
}
.grip {
    align-self: flex-end;
    margin: 0 0 3px auto;
}

/* status bar */
.status {
    display: flex;
    align-items: center;
    height: 26px;
    padding-top: 2px;
    color: #222;
    background: #dedee0;
}
.status-text {
    display: grid;
    grid-template-columns: 155px 39px 43px 42px 92px 102px 36px 67px;
}
.status-tools {
    display: flex;
    align-items: center;
    gap: 3px;
}
.status-tools button {
    height: 22px;
    min-width: 36px;
    padding: 0 6px;
    justify-content: center;
    background: #ccc;
    border: 1px solid #999;
}
.status-tools .narrow {
    min-width: 25px;
    padding: 0 3px;
}
.status-tools .on {
    margin-right: 3px;
    background: #fff;
    border-color: #1e90ff;
}
.status-tools span {
    margin-left: 3px;
}
```
